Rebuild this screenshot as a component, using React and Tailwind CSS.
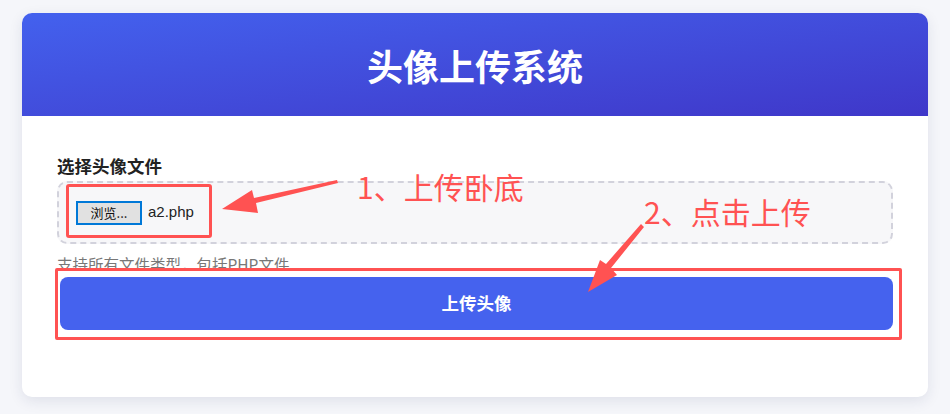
import React from 'react'

const font = { fontFamily: '"Noto Sans CJK SC", "Noto Sans", sans-serif' }

function Annotations() {
  return (
    <>
      <svg className="absolute left-0 top-0 pointer-events-none z-20" width="950" height="414" viewBox="0 0 950 414">
        {/* arrow 1 */}
        <polygon points="337,180 338,183 256,203 258,213 222,209 252,190 254,198" fill="#ff5252" />
        {/* arrow 2 */}
        <polygon points="641,224 644,227 611,268 617,275 588,292 600,260 606,264" fill="#ff5252" />
      </svg>
      <div className="absolute left-[66px] top-[184px] w-[146px] h-[54px] border-[3px] border-[#ff5252] rounded-[3px] z-20 pointer-events-none" />
      <div className="absolute left-[55px] top-[268px] w-[847px] h-[72px] border-[3px] border-[#ff5252] rounded-[2px] bg-white z-[1]" />
      <div className="absolute left-[357px] top-[166px] text-[30px] leading-[40px] text-[#ff5252] z-20 whitespace-nowrap" style={font}>1、上传卧底</div>
      <div className="absolute left-[644px] top-[191px] text-[30px] leading-[40px] text-[#ff5252] z-20 whitespace-nowrap" style={font}>2、点击上传</div>
    </>
  )
}

export default function App() {
  return (
    <div className="relative w-[950px] h-[414px] bg-[#f5f6fa] overflow-hidden pt-[13px] px-[22px]" style={font}>
      <div className="bg-white rounded-[10px] overflow-hidden shadow-[0_4px_14px_rgba(30,40,90,0.10)] h-[384px]">
        <div className="h-[103px] flex items-center justify-center bg-gradient-to-br from-[#4361ee] to-[#3f37c9]">
          <h1 className="text-white text-[36px] font-bold leading-none">头像上传系统</h1>
        </div>
        <div className="px-[35px] pt-[37px]">
          <div className="text-[17.5px] font-bold text-[#222] leading-[25px] mb-[3px]">选择头像文件</div>
          <div className="h-[63px] border-2 border-dashed border-[#d2d2dc] rounded-[10px] bg-[#f7f7f9] flex items-center pl-[17px]">
            <div className="flex items-center gap-[6px]">
              <span className="h-[24px] w-[66px] flex items-center justify-center bg-[#e1e1e1] border-2 border-[#0078d7] text-[13px] text-[#111]">浏览...</span>
              <span className="text-[15px] text-[#222]" style={{ fontFamily: '"Liberation Sans", "Noto Sans CJK SC", sans-serif' }}>a2.php</span>
            </div>
          </div>
          <div className="text-[15.5px] text-[#777] leading-[22px] mt-[9px]">支持所有文件类型，包括PHP文件</div>
          <button className="relative z-[2] mt-[2px] ml-[3px] w-[833px] h-[53px] rounded-[8px] bg-[#4562ee] text-white text-[17.5px] font-bold">上传头像</button>
        </div>
      </div>
      <Annotations />
    </div>
  )
}
